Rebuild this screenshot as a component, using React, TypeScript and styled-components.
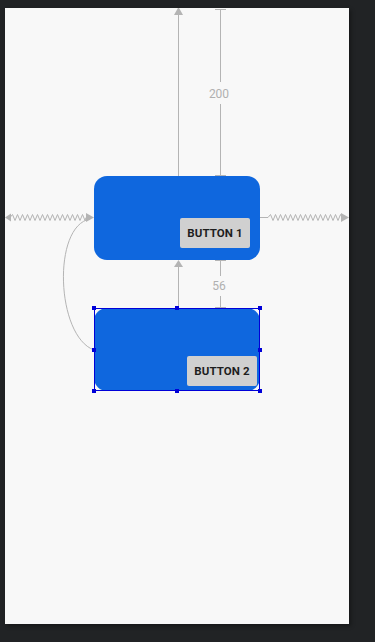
import React from 'react';
import styled, { createGlobalStyle } from 'styled-components';

const GlobalStyle = createGlobalStyle`
  html, body {
    margin: 0;
    padding: 0;
    background: #212325;
    font-family: Roboto, 'Liberation Sans', sans-serif;
  }
`;

const LINE = '#b4b4b4';
const SELECT = '#0000d8';

const zigzag = (x1: number, x2: number, y: number) => {
  let d = `M${x1} ${y}`;
  let up = true;
  for (let x = x1 + 2.5; x < x2; x += 2.5) {
    d += ` L${x} ${y + (up ? -3 : 3)}`;
    up = !up;
  }
  return d + ` L${x2} ${y}`;
};

const handles: [number, number][] = [
  [94, 308], [177, 308], [260, 308],
  [94, 350], [260, 350],
  [94, 391], [177, 391], [260, 391],
];

const Constraints: React.FC = () => (
  <Overlay viewBox="5 8 344 616" width={344} height={616}>
    <g stroke={LINE} strokeWidth={1} fill="none">
      {/* top arrow to parent */}
      <line x1={178.5} y1={12} x2={178.5} y2={176} />
      {/* 200 margin */}
      <line x1={220.5} y1={9} x2={220.5} y2={82} />
      <line x1={220.5} y1={104} x2={220.5} y2={176} />
      <line x1={215} y1={9.5} x2={226} y2={9.5} />
      <line x1={215} y1={175.5} x2={226} y2={175.5} />
      {/* between cards */}
      <line x1={178.5} y1={266} x2={178.5} y2={308} />
      <line x1={220.5} y1={260} x2={220.5} y2={276} />
      <line x1={220.5} y1={296} x2={220.5} y2={308} />
      <line x1={215} y1={260.5} x2={226} y2={260.5} />
      <line x1={215} y1={307.5} x2={226} y2={307.5} />
      {/* horizontal chains */}
      <path d={zigzag(10, 86, 217.5)} />
      <line x1={260} y1={217.5} x2={268} y2={217.5} />
      <path d={zigzag(268, 342, 217.5)} />
      {/* baseline link */}
      <path d="M94 350 C 56 336, 52 226, 90 219" />
    </g>
    <g fill={LINE}>
      <polygon points="178.5,7 174,15 183,15" />
      <polygon points="178.5,260 174,267 183,267" />
      <polygon points="5,217.5 11,213.5 11,221.5" />
      <polygon points="94,217.5 86,213 86,222" />
      <polygon points="349,217.5 341,213 341,222" />
    </g>
    <DimLabel x={219} y={98}>200</DimLabel>
    <DimLabel x={219} y={290}>56</DimLabel>
    <rect x={94.5} y={308.5} width={165} height={82} fill="none" stroke={SELECT} strokeWidth={1} />
    {handles.map(([x, y]) => (
      <rect key={`${x}-${y}`} x={x - 2} y={y - 2} width={4} height={4} fill={SELECT} />
    ))}
  </Overlay>
);

export default function App() {
  return (
    <>
      <GlobalStyle />
      <Editor>
        <Canvas>
          <Constraints />
          <Card $height={84}>
            <CardButton $right={10} $bottom={12}>BUTTON 1</CardButton>
          </Card>
          <Card $height={83} $gap={48}>
            <CardButton $right={3} $bottom={5}>BUTTON 2</CardButton>
          </Card>
        </Canvas>
      </Editor>
    </>
  );
}

const Editor = styled.div`
  width: 375px;
  height: 642px;
  padding: 8px 0 0 5px;
  box-sizing: border-box;
  background: #212325;
`;

const Canvas = styled.div`
  position: relative;
  width: 344px;
  height: 616px;
  background: #f8f8f8;
  padding: 168px 0 0 89px;
  box-sizing: border-box;
  display: flex;
  flex-direction: column;
  box-shadow: 2px 2px 4px rgba(0, 0, 0, 0.35);
`;

const Overlay = styled.svg`
  position: absolute;
  left: 0;
  top: 0;
  z-index: 2;
  pointer-events: none;
`;

const DimLabel = styled.text`
  fill: #b0b0b0;
  font-family: Roboto, 'Liberation Sans', sans-serif;
  font-size: 12px;
  text-anchor: middle;
`;

const Card = styled.div<{ $height: number; $gap?: number }>`
  width: 166px;
  height: ${(p) => p.$height}px;
  flex-shrink: 0;
  margin-top: ${(p) => p.$gap ?? 0}px;
  background: #0f67de;
  border-radius: 13px;
  display: flex;
  align-items: flex-end;
  justify-content: flex-end;
  position: relative;
  z-index: 1;
`;

const CardButton = styled.div<{ $right: number; $bottom: number }>`
  width: 70px;
  height: 30px;
  margin: 0 ${(p) => p.$right}px ${(p) => p.$bottom}px 0;
  background: #d0d0d0;
  border-radius: 2px;
  display: flex;
  align-items: center;
  justify-content: center;
  color: #1e1e1e;
  font-family: Roboto, 'Liberation Sans', sans-serif;
  font-weight: 700;
  font-size: 11.5px;
  letter-spacing: 0.1px;
`;
